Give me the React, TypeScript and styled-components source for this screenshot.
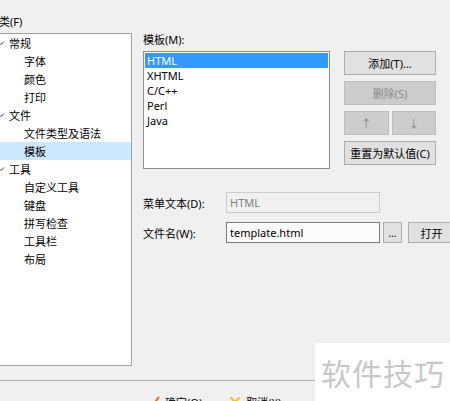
import styled, { createGlobalStyle } from 'styled-components';

const GlobalStyle = createGlobalStyle`
  html, body {
    margin: 0;
    padding: 0;
    background: #f0f0f0;
    overflow: hidden;
  }
  * { box-sizing: border-box; }
`;

const uiFont = `"Noto Sans", "Noto Sans CJK SC", sans-serif`;

type Node = { label: string; level: 0 | 1; expanded?: boolean; selected?: boolean };

const categories: Node[] = [
  { label: '常规', level: 0, expanded: true },
  { label: '字体', level: 1 },
  { label: '颜色', level: 1 },
  { label: '打印', level: 1 },
  { label: '文件', level: 0, expanded: true },
  { label: '文件类型及语法', level: 1 },
  { label: '模板', level: 1, selected: true },
  { label: '工具', level: 0, expanded: true },
  { label: '自定义工具', level: 1 },
  { label: '键盘', level: 1 },
  { label: '拼写检查', level: 1 },
  { label: '工具栏', level: 1 },
  { label: '布局', level: 1 },
];

const templates = ['HTML', 'XHTML', 'C/C++', 'Perl', 'Java'];

function Chevron() {
  return (
    <svg width="8" height="8" viewBox="0 0 8 8" aria-hidden="true">
      <path d="M1 2.5 L4 5.5 L7 2.5" fill="none" stroke="#404040" strokeWidth="1" />
    </svg>
  );
}

function CheckIcon() {
  return (
    <svg width="12" height="12" viewBox="0 0 12 12" aria-hidden="true">
      <path d="M1.5 6.5 L4.5 10 L10.5 1.5" fill="none" stroke="#e2672b" strokeWidth="2" strokeLinecap="round" />
    </svg>
  );
}

function CrossIcon() {
  return (
    <svg width="12" height="12" viewBox="0 0 12 12" aria-hidden="true">
      <path d="M2 2 L10 10 M10 2 L2 10" fill="none" stroke="#f2c13c" strokeWidth="2.4" strokeLinecap="round" />
    </svg>
  );
}

export default function App() {
  return (
    <Window>
      <GlobalStyle />
      <Dialog>
        <Main>
          <CategoryPane>
            <FieldLabel>分类(F)</FieldLabel>
            <TreeBox>
              {categories.map((node) => (
                <TreeRow key={node.label} $level={node.level} $selected={!!node.selected}>
                  {node.expanded && (
                    <Expander>
                      <Chevron />
                    </Expander>
                  )}
                  {node.label}
                </TreeRow>
              ))}
            </TreeBox>
          </CategoryPane>

          <TemplatePane>
            <FieldLabel>模板(M):</FieldLabel>
            <ListRow>
              <ListBox>
                {templates.map((t, i) => (
                  <ListItem key={t} $selected={i === 0}>
                    {t}
                  </ListItem>
                ))}
              </ListBox>
              <ButtonColumn>
                <Button>添加(T)...</Button>
                <Button $disabled>删除(S)</Button>
                <ButtonPair>
                  <Button $disabled>↑</Button>
                  <Button $disabled>↓</Button>
                </ButtonPair>
                <Button>重置为默认值(C)</Button>
              </ButtonColumn>
            </ListRow>

            <Form>
              <FormRow>
                <FormLabel>菜单文本(D):</FormLabel>
                <TextBox $disabled>HTML</TextBox>
              </FormRow>
              <FormRow>
                <FormLabel>文件名(W):</FormLabel>
                <TextBox>template.html</TextBox>
                <BrowseButton>...</BrowseButton>
                <OpenButton>打开</OpenButton>
              </FormRow>
            </Form>
          </TemplatePane>
        </Main>

        <Separator />

        <Footer>
          <FooterButton>
            <CheckIcon />
            确定(O)
          </FooterButton>
          <FooterButton>
            <CrossIcon />
            取消(X)
          </FooterButton>
        </Footer>
      </Dialog>

      <Watermark>软件技巧</Watermark>
    </Window>
  );
}

const Window = styled.div`
  position: relative;
  width: 450px;
  height: 401px;
  overflow: hidden;
  font-family: ${uiFont};
  font-size: 11px;
  color: #000;
`;

const Dialog = styled.div`
  margin-left: -12px;
  width: 480px;
  padding-top: 14px;
  display: flex;
  flex-direction: column;
`;

const Main = styled.div`
  display: flex;
  gap: 11px;
`;

const CategoryPane = styled.div`
  width: 144px;
  display: flex;
  flex-direction: column;
`;

const FieldLabel = styled.div`
  height: 16px;
  line-height: 16px;
  white-space: nowrap;
`;

const TreeBox = styled.div`
  margin-top: 3px;
  height: 333px;
  background: #fff;
  border: 1px solid #a0a0a0;
`;

const TreeRow = styled.div<{ $level: 0 | 1; $selected: boolean }>`
  position: relative;
  height: 18px;
  display: flex;
  align-items: center;
  padding-left: ${(p) => (p.$level === 0 ? 20 : 35)}px;
  background: ${(p) => (p.$selected ? '#cce8ff' : 'transparent')};
  white-space: nowrap;
`;

const Expander = styled.span`
  position: absolute;
  left: 8px;
  top: 5px;
  display: flex;
`;

const TemplatePane = styled.div`
  padding-top: 18px;
  display: flex;
  flex-direction: column;
`;

const ListRow = styled.div`
  display: flex;
  margin-top: 3px;
`;

const ListBox = styled.div`
  width: 187px;
  height: 118px;
  background: #fff;
  border: 1px solid #8f8f8f;
  padding: 1px;
`;

const ListItem = styled.div<{ $selected: boolean }>`
  height: 15px;
  line-height: 15px;
  padding-left: 2px;
  background: ${(p) => (p.$selected ? '#3399ff' : 'transparent')};
  color: ${(p) => (p.$selected ? '#fff' : '#000')};
`;

const ButtonColumn = styled.div`
  margin-left: 14px;
  width: 92px;
  display: flex;
  flex-direction: column;
  gap: 6px;
`;

const ButtonPair = styled.div`
  display: grid;
  grid-template-columns: 1fr 1fr;
  gap: 3px;
`;

const Button = styled.div<{ $disabled?: boolean }>`
  height: 24px;
  display: flex;
  align-items: center;
  justify-content: center;
  white-space: nowrap;
  background: ${(p) => (p.$disabled ? '#cccccc' : '#e1e1e1')};
  border: 1px solid ${(p) => (p.$disabled ? '#bfbfbf' : '#adadad')};
  color: ${(p) => (p.$disabled ? '#8a8a8a' : '#000')};
`;

const Form = styled.div`
  margin-top: 23px;
  display: flex;
  flex-direction: column;
  gap: 9px;
`;

const FormRow = styled.div`
  display: flex;
  align-items: center;
  height: 21px;
`;

const FormLabel = styled.div`
  width: 83px;
  white-space: nowrap;
`;

const TextBox = styled.div<{ $disabled?: boolean }>`
  width: 154px;
  height: 21px;
  line-height: 19px;
  padding-left: 3px;
  background: ${(p) => (p.$disabled ? '#f0f0f0' : '#fbfbfb')};
  border: 1px solid ${(p) => (p.$disabled ? '#cccccc' : '#7a7a7a')};
  color: ${(p) => (p.$disabled ? '#808080' : '#000')};
`;

const BrowseButton = styled(Button)`
  margin-left: 3px;
  width: 19px;
  height: 21px;
  align-items: flex-end;
  padding-bottom: 5px;
  font-size: 10px;
  line-height: 8px;
`;

const OpenButton = styled(Button)`
  margin-left: 6px;
  width: 47px;
  height: 21px;
`;

const Separator = styled.div`
  margin-top: 14px;
  height: 1px;
  background: #acacac;
`;

const Footer = styled.div`
  display: flex;
  gap: 27px;
  padding: 13px 0 0 160px;
`;

const FooterButton = styled.div`
  display: flex;
  align-items: center;
  gap: 5px;
  height: 16px;
  white-space: nowrap;
`;

const Watermark = styled.div`
  position: absolute;
  left: 315px;
  top: 343px;
  width: 140px;
  height: 58px;
  background: #fff;
  display: flex;
  align-items: center;
  padding-left: 6px;
  font-family: "Noto Sans CJK SC", sans-serif;
  font-size: 30px;
  letter-spacing: 1px;
  color: #c8c8c8;
  white-space: nowrap;
`;
